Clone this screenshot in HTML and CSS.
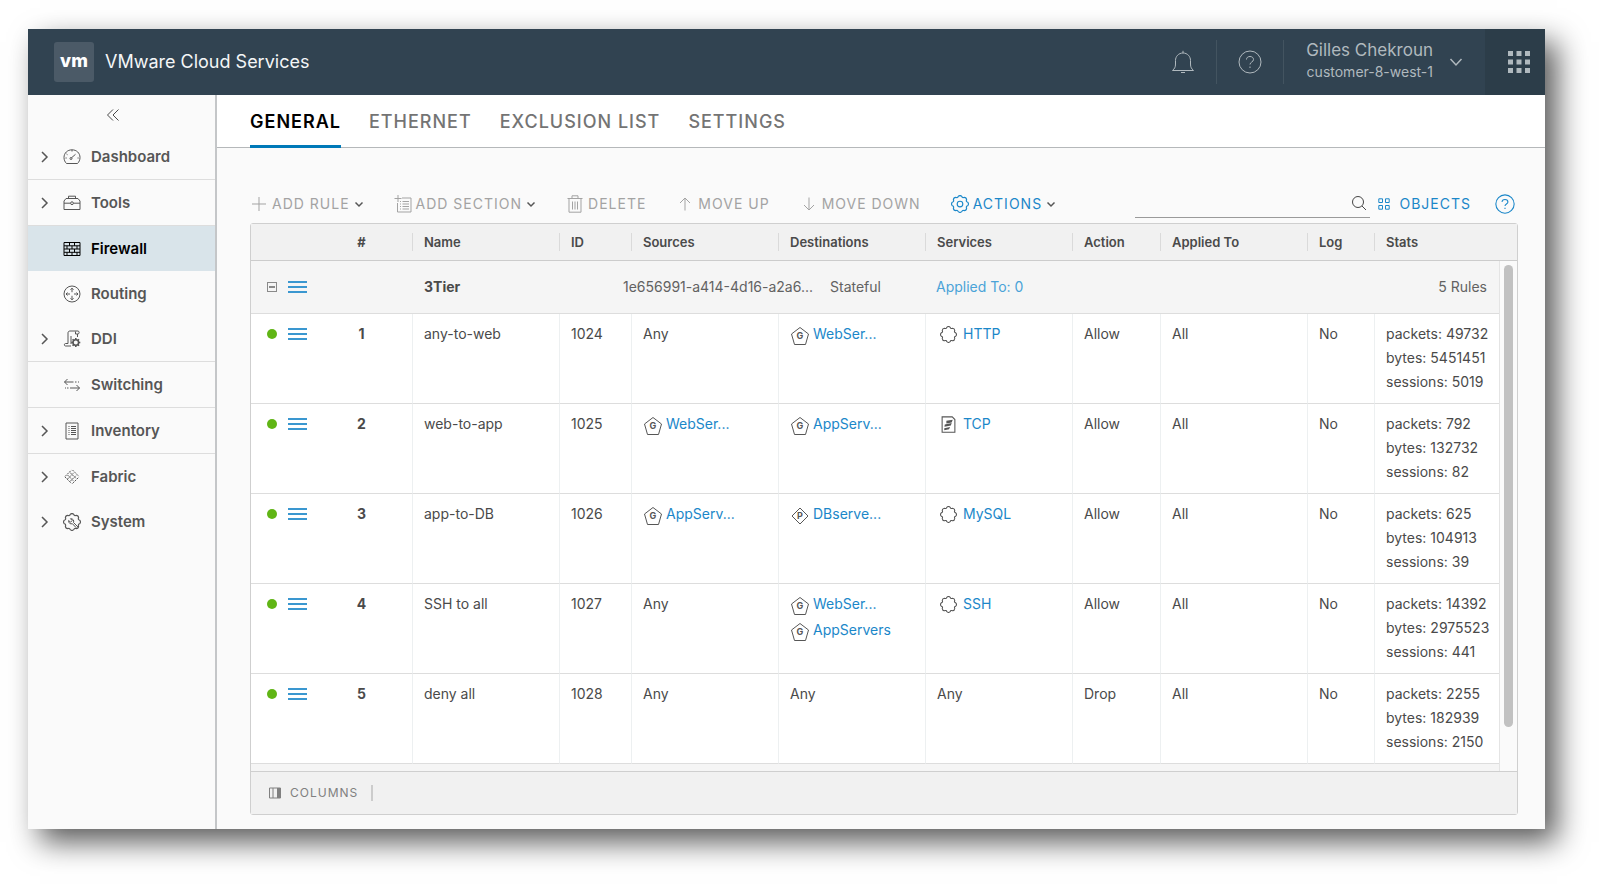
FILE: index.html
```html
<!DOCTYPE html>
<html lang="en">
<head>
    <meta charset="UTF-8">
    <meta name="viewport" content="width=device-width, initial-scale=1.0">
    <title>VMware Cloud Services</title>
    <link rel="stylesheet" href="styles.css">
</head>
<body>

    <svg class="sprite" aria-hidden="true">
        <symbol id="chevron" viewBox="0 0 12 12"><path d="M3 1l5 5-5 5"/></symbol>
        <symbol id="caret" viewBox="0 0 10 10"><path d="M1.500 3.500L5 7l3.500-3.500"/></symbol>
        <symbol id="gear" viewBox="0 0 16 16"><path d="M14.800 9.600A1.300 1.300 0 0 0 13.900 11.700A2.400 2.400 0 0 1 11.700 13.900A1.300 1.300 0 0 0 9.600 14.800A2.400 2.400 0 0 1 6.400 14.800A1.300 1.300 0 0 0 4.300 13.900A2.400 2.400 0 0 1 2.100 11.700A1.300 1.300 0 0 0 1.200 9.600A2.400 2.400 0 0 1 1.200 6.400A1.300 1.300 0 0 0 2.100 4.300A2.400 2.400 0 0 1 4.300 2.100A1.300 1.300 0 0 0 6.400 1.200A2.400 2.400 0 0 1 9.600 1.200A1.300 1.300 0 0 0 11.700 2.100A2.400 2.400 0 0 1 13.900 4.300A1.300 1.300 0 0 0 14.800 6.400A2.400 2.400 0 0 1 14.800 9.600Z"/></symbol>
        <symbol id="group" viewBox="0 0 20 20"><path d="M10 1.500L18.500 8l-3 10.500h-11l-3-10.500z"/></symbol>
        <symbol id="pool" viewBox="0 0 20 20"><path d="M10 2l8 8-8 8-8-8z"/></symbol>
        <symbol id="script" viewBox="0 0 16 16">
            <path d="M2 .8h9.500l2.500 2.500v12H2z"/>
            <path class="solid" d="M6 4.500l6-1-1 2.500-5 1zM4.500 8l6.500-1.500-.8 2.500-6 1.200zM4 11.500l5.500-1.200-1 2.200-4.500 1z"/>
        </symbol>
        <symbol id="help" viewBox="0 0 24 24">
            <circle cx="12" cy="12" r="11"/>
            <path d="M8.500 9.500C8.500 7.500 10 6.500 12 6.500s3.500 1.200 3.500 3c0 2.500-3.500 2.500-3.500 5M12 16.500v1.500"/>
        </symbol>
    </svg>

    <div class="window">
        <header class="topbar">
            <span class="logo">vm</span>
            <h1 class="product">VMware Cloud Services</h1>
            <button class="top-btn" aria-label="Notifications">
                <svg class="icon-lg" viewBox="0 0 24 24"><path d="M1.500 20.500h21c-2-2-3-3-3-6.500V10.500c0-4-3-7.500-7.500-7.500s-7.500 3.500-7.500 7.500V14c0 3.500-1 4.500-3 6.500zM12 3V.8M10 22.500h4"/></svg>
            </button>
            <button class="top-btn" aria-label="Help">
                <svg class="icon-lg"><use href="#help"/></svg>
            </button>
            <button class="user">
                <span class="user-text">
                    <span class="user-name">Gilles Chekroun</span>
                    <span class="user-org">customer-8-west-1</span>
                </span>
                <svg class="user-caret" viewBox="0 0 14 14"><path d="M1.500 4L7 10l5.500-6"/></svg>
            </button>
            <button class="apps" aria-label="Services">
                <svg viewBox="0 0 22 22"><path d="M0 0h5v5H0zM8.500 0h5v5h-5zM17 0h5v5h-5zM0 8.500h5v5H0zM8.500 8.500h5v5h-5zM17 8.500h5v5h-5zM0 17h5v5H0zM8.500 17h5v5h-5zM17 17h5v5h-5z"/></svg>
            </button>
        </header>

        <div class="layout">
            <nav class="sidebar">
                <button class="collapse" aria-label="Collapse menu">
                    <svg viewBox="0 0 14 14"><path d="M7 1.500L1.500 7 7 12.500M12.500 1.500L7 7l5.500 5.500"/></svg>
                </button>
                <a class="nav-item line" href="#">
                    <svg class="arrow"><use href="#chevron"/></svg>
                    <svg class="nav-icon" viewBox="0 0 18 18"><path d="M3.500 15.500h11C16 14 17 12 17 9.500 17 5 13.500 1.800 9 1.800S1 5 1 9.500c0 2.500 1 4.500 2.500 6zM8.500 9.800l4-3.500M9 2v1.500M3.500 6l1 .7M2.500 10h1.200M14.500 10h1.200"/><circle cx="8" cy="10.500" r="1"/></svg>
                    <span>Dashboard</span>
                </a>
                <a class="nav-item line" href="#">
                    <svg class="arrow"><use href="#chevron"/></svg>
                    <svg class="nav-icon" viewBox="0 0 18 18"><path d="M1 7l2-2.500h12L17 7v8.500H1zM1 9.200h6.500M10.500 9.200H17M5.500 4.500V2.200h7v2.300"/><circle cx="9" cy="9.200" r="1.400"/></svg>
                    <span>Tools</span>
                </a>
                <a class="nav-item active" href="#">
                    <span class="arrow"></span>
                    <svg class="nav-icon" viewBox="0 0 18 18"><path d="M1 2.500h16v13H1zM1 5.800h16M1 9h16M1 12.300h16M6.500 2.500v3.300M11.500 2.500v3.300M4 5.800V9M9 5.800V9M14 5.800V9M6.500 9v3.300M11.500 9v3.300M4 12.300v3.200M9 12.300v3.200M14 12.300v3.200"/></svg>
                    <span>Firewall</span>
                </a>
                <a class="nav-item" href="#">
                    <span class="arrow"></span>
                    <svg class="nav-icon" viewBox="0 0 18 18"><circle cx="9" cy="9" r="8"/><path d="M9 3.200v4M7.500 4.700L9 3.200l1.500 1.500M9 14.800v-4M7.500 13.300L9 14.800l1.500-1.500M3 9h4M4.500 7.500L3 9l1.500 1.500M15 9h-4M13.500 7.500L15 9l-1.500 1.500"/></svg>
                    <span>Routing</span>
                </a>
                <a class="nav-item line" href="#">
                    <svg class="arrow"><use href="#chevron"/></svg>
                    <svg class="nav-icon" viewBox="0 0 18 18"><path d="M8 16H2.500C1 16 1 13.500 2.500 13.500H5V3c0-1.200.7-2 2-2h8c1.500 0 1.500 3 0 3h-2.500V1.500M8 6v8M14.500 4v3"/><circle class="bold" cx="12.800" cy="12.500" r="2.800"/><path class="bold" d="M12.800 8v2M12.800 15v2M8.300 12.500h2M15.300 12.500h2M9.600 9.300l1.400 1.400M14.600 14.300l1.400 1.400M16 9.300l-1.400 1.400M11 14.300l-1.400 1.400"/></svg>
                    <span>DDI</span>
                </a>
                <a class="nav-item line" href="#">
                    <span class="arrow"></span>
                    <svg class="nav-icon" viewBox="0 0 18 18"><path d="M4.500 3L1.500 6l3 3M1.500 6h9M12 6h1.500M15 6h1M13.500 9l3 3-3 3M16.500 12H7M5.500 12H4M3 12H2"/></svg>
                    <span>Switching</span>
                </a>
                <a class="nav-item line" href="#">
                    <svg class="arrow"><use href="#chevron"/></svg>
                    <svg class="nav-icon" viewBox="0 0 18 18"><path d="M3 1h12v16H3z"/><path d="M5.500 4.500h1M8 4.500h5M5.500 6.500h1M8 6.500h5M5.500 8.500h1M8 8.500h5M5.500 10.500h1M8 10.500h5M5.500 12.500h1M8 12.500h5"/></svg>
                    <span>Inventory</span>
                </a>
                <a class="nav-item" href="#">
                    <svg class="arrow"><use href="#chevron"/></svg>
                    <svg class="nav-icon" viewBox="0 0 18 18"><path d="M2 8.500l6.500-6.500M4.500 11L11 4.500M7 13.500L13.500 7M9.500 15.500L16 9M9.500 2L16 8.500M7 4.500l6.500 6.500M4.500 7l6.500 6.500M2 9l6.500 6.500" stroke-dasharray="2 1"/></svg>
                    <span>Fabric</span>
                </a>
                <a class="nav-item" href="#">
                    <svg class="arrow"><use href="#chevron"/></svg>
                    <svg class="nav-icon" viewBox="0 0 18 18"><use href="#gear" width="18" height="18"/><path d="M15 14l-4.500-4.500c.8-2-.5-4-3-3.800l1.700 1.800-1.600 1.700-2-1.700c-.2 2.500 1.800 4 3.800 3.200l3.800 4"/></svg>
                    <span>System</span>
                </a>
            </nav>

            <main class="main">
                <div class="tabs">
                    <a class="tab selected" href="#">GENERAL</a>
                    <a class="tab" href="#">ETHERNET</a>
                    <a class="tab" href="#">EXCLUSION LIST</a>
                    <a class="tab" href="#">SETTINGS</a>
                </div>

                <div class="content">
                    <div class="toolbar">
                        <button class="tool">
                            <svg class="icon-md" viewBox="0 0 18 18"><path d="M9 2v14M2 9h14"/></svg>
                            ADD RULE
                            <svg class="caret"><use href="#caret"/></svg>
                        </button>
                        <button class="tool">
                            <svg class="icon-md" viewBox="0 0 18 18"><path d="M8 3h9v14H3.500V8M4 0v7M.5 3.500h7M6 6.500h1M8.500 6.500H15M6 9h1M8.500 9H15M6 11.500h1M8.500 11.500H15M6 14h1M8.500 14H15"/></svg>
                            ADD SECTION
                            <svg class="caret"><use href="#caret"/></svg>
                        </button>
                        <button class="tool">
                            <svg class="icon-md" viewBox="0 0 18 18"><path d="M1.500 3.500h15M3 3.500v13.700h12V3.500M6 3V.8h6V3M6.500 6.500v8M9 6.500v8M11.500 6.500v8"/></svg>
                            DELETE
                        </button>
                        <button class="tool">
                            <svg class="icon-md" viewBox="0 0 18 18"><path d="M9 15.500V3M4 8l5-5 5 5"/></svg>
                            MOVE UP
                        </button>
                        <button class="tool">
                            <svg class="icon-md" viewBox="0 0 18 18"><path d="M9 2.500V15M4 10l5 5 5-5"/></svg>
                            MOVE DOWN
                        </button>
                        <button class="tool blue">
                            <svg class="icon-md" viewBox="0 0 16 16"><use href="#gear"/><circle cx="8" cy="8" r="2.500"/></svg>
                            ACTIONS
                            <svg class="caret"><use href="#caret"/></svg>
                        </button>
                        <label class="search">
                            <input type="text" aria-label="Search rules">
                            <svg viewBox="0 0 16 16"><circle cx="7" cy="7" r="5.500"/><path d="M11 11l4 4"/></svg>
                        </label>
                        <button class="tool blue objects">
                            <svg class="icon-sm" viewBox="0 0 12 12"><path d="M.8.8h3.700v3.700H.8zM7.500.8h3.700v3.700H7.500zM.8 7.500h3.700v3.700H.8zM7.500 7.500h3.700v3.700H7.500z"/></svg>
                            OBJECTS
                        </button>
                        <button class="tool blue" aria-label="Help">
                            <svg class="icon-help"><use href="#help"/></svg>
                        </button>
                    </div>

                    <div class="panel">
                        <table class="rules">
                            <colgroup>
                                <col class="c-state"><col class="c-num"><col class="c-wide"><col class="c-id">
                                <col class="c-wide"><col class="c-wide"><col class="c-wide"><col class="c-action">
                                <col class="c-wide"><col class="c-log"><col class="c-stats">
                            </colgroup>
                            <thead>
                                <tr>
                                    <th></th>
                                    <th class="num">#</th>
                                    <th><span>Name</span></th>
                                    <th><span>ID</span></th>
                                    <th><span>Sources</span></th>
                                    <th><span>Destinations</span></th>
                                    <th><span>Services</span></th>
                                    <th><span>Action</span></th>
                                    <th><span>Applied To</span></th>
                                    <th><span>Log</span></th>
                                    <th><span>Stats</span></th>
                                </tr>
                            </thead>
                            <tbody>
                                <tr class="section">
                                    <td colspan="2">
                                        <div class="state">
                                            <button class="toggle" aria-label="Collapse section"><svg viewBox="0 0 10 10"><path d="M0 0h10v10H0zM2 5h6"/></svg></button>
                                            <button class="bars" aria-label="Section menu"></button>
                                        </div>
                                    </td>
                                    <td colspan="9">
                                        <div class="section-info">
                                            <b>3Tier</b>
                                            <span class="uuid">1e656991-a414-4d16-a2a6...</span>
                                            <span class="stateful">Stateful</span>
                                            <a href="#">Applied To: 0</a>
                                            <span class="count">5 Rules</span>
                                        </div>
                                    </td>
                                </tr>
                                <tr>
                                    <td><div class="state"><i class="dot"></i><button class="bars" aria-label="Rule menu"></button></div></td>
                                    <td class="num">1</td>
                                    <td>any-to-web</td>
                                    <td>1024</td>
                                    <td>Any</td>
                                    <td><a class="obj" href="#"><span class="badge"><svg><use href="#group"/></svg>G</span>WebSer...</a></td>
                                    <td><a class="svc" href="#"><svg><use href="#gear"/></svg>HTTP</a></td>
                                    <td>Allow</td>
                                    <td>All</td>
                                    <td>No</td>
                                    <td>packets: 49732<br>bytes: 5451451<br>sessions: 5019</td>
                                </tr>
                                <tr>
                                    <td><div class="state"><i class="dot"></i><button class="bars" aria-label="Rule menu"></button></div></td>
                                    <td class="num">2</td>
                                    <td>web-to-app</td>
                                    <td>1025</td>
                                    <td><a class="obj" href="#"><span class="badge"><svg><use href="#group"/></svg>G</span>WebSer...</a></td>
                                    <td><a class="obj" href="#"><span class="badge"><svg><use href="#group"/></svg>G</span>AppServ...</a></td>
                                    <td><a class="svc" href="#"><svg><use href="#script"/></svg>TCP</a></td>
                                    <td>Allow</td>
                                    <td>All</td>
                                    <td>No</td>
                                    <td>packets: 792<br>bytes: 132732<br>sessions: 82</td>
                                </tr>
                                <tr>
                                    <td><div class="state"><i class="dot"></i><button class="bars" aria-label="Rule menu"></button></div></td>
                                    <td class="num">3</td>
                                    <td>app-to-DB</td>
                                    <td>1026</td>
                                    <td><a class="obj" href="#"><span class="badge"><svg><use href="#group"/></svg>G</span>AppServ...</a></td>
                                    <td><a class="obj" href="#"><span class="badge"><svg><use href="#pool"/></svg>P</span>DBserve...</a></td>
                                    <td><a class="svc" href="#"><svg><use href="#gear"/></svg>MySQL</a></td>
                                    <td>Allow</td>
                                    <td>All</td>
                                    <td>No</td>
                                    <td>packets: 625<br>bytes: 104913<br>sessions: 39</td>
                                </tr>
                                <tr>
                                    <td><div class="state"><i class="dot"></i><button class="bars" aria-label="Rule menu"></button></div></td>
                                    <td class="num">4</td>
                                    <td>SSH to all</td>
                                    <td>1027</td>
                                    <td>Any</td>
                                    <td>
                                        <a class="obj" href="#"><span class="badge"><svg><use href="#group"/></svg>G</span>WebSer...</a>
                                        <a class="obj" href="#"><span class="badge"><svg><use href="#group"/></svg>G</span>AppServers</a>
                                    </td>
                                    <td><a class="svc" href="#"><svg><use href="#gear"/></svg>SSH</a></td>
                                    <td>Allow</td>
                                    <td>All</td>
                                    <td>No</td>
                                    <td>packets: 14392<br>bytes: 2975523<br>sessions: 441</td>
                                </tr>
                                <tr>
                                    <td><div class="state"><i class="dot"></i><button class="bars" aria-label="Rule menu"></button></div></td>
                                    <td class="num">5</td>
                                    <td>deny all</td>
                                    <td>1028</td>
                                    <td>Any</td>
                                    <td>Any</td>
                                    <td>Any</td>
                                    <td>Drop</td>
                                    <td>All</td>
                                    <td>No</td>
                                    <td>packets: 2255<br>bytes: 182939<br>sessions: 2150</td>
                                </tr>
                            </tbody>
                        </table>
                        <div class="scrollbar"><div class="thumb"></div></div>
                        <div class="panel-foot">
                            <button class="columns">
                                <svg viewBox="0 0 12 12"><path d="M.5 1h11v10H.5zM4 1v10"/><path class="solid" d="M8 1h3.500v10H8z"/></svg>
                                COLUMNS
                            </button>
                        </div>
                    </div>
                </div>
            </main>
        </div>
    </div>

</body>
</html>
```
FILE: styles.css
```css
* {
    box-sizing: border-box;
}

body {
    margin: 0;
    padding: 29px 55px 55px 28px;
    min-height: 100vh;
    display: flex;
    background-color: #fff;
    color: #4a4a4a;
    font-family: Inter, "Open Sans", sans-serif;
    font-size: 14px;
    line-height: 24px;
}

a {
    color: #1b87c9;
    text-decoration: none;
}

button {
    display: flex;
    align-items: center;
    padding: 0;
    border: none;
    background: none;
    color: inherit;
    font: inherit;
    cursor: pointer;
}

svg {
    display: block;
    flex: none;
    fill: none;
    stroke: currentColor;
}

svg .solid {
    fill: currentColor;
    stroke: none;
}

.sprite {
    position: absolute;
    width: 0;
    height: 0;
}

.window {
    flex: 1;
    display: flex;
    flex-direction: column;
    min-width: 0;
    background-color: #fafafa;
    box-shadow: 12px 13px 28px rgba(0, 0, 0, 0.65);
}

/* top bar */
.topbar {
    display: flex;
    align-items: center;
    height: 66px;
    padding-left: 26px;
    background-color: #314351;
    color: #b0b9be;
}

.logo {
    width: 40px;
    height: 40px;
    border-radius: 3px;
    background-color: #4b5a67;
    color: #fff;
    font-size: 18px;
    font-weight: 800;
    line-height: 38px;
    text-align: center;
}

.product {
    margin: 0 auto 0 11px;
    color: #f4f6f7;
    font-size: 18px;
    font-weight: 400;
}

.top-btn {
    justify-content: center;
    width: 67px;
    height: 44px;
    border-right: 1px solid #435460;
}

.icon-lg {
    width: 24px;
    height: 24px;
}

.user {
    gap: 16px;
    padding: 0 22px;
}

.user-text {
    display: flex;
    flex-direction: column;
    padding-bottom: 2px;
    line-height: 22px;
    text-align: right;
}

.user-name {
    font-size: 17px;
}

.user-org {
    font-size: 14px;
}

.user-caret {
    width: 14px;
    height: 14px;
    stroke-width: 1.5;
}

.apps {
    justify-content: center;
    width: 60px;
    height: 66px;
    padding-left: 8px;
    background-color: #2c3d49;
}

.apps svg {
    width: 22px;
    height: 22px;
    fill: currentColor;
    stroke: none;
}

/* sidebar */
.layout {
    flex: 1;
    display: flex;
}

.sidebar {
    flex: none;
    width: 189px;
    border-right: 2px solid #c4c6c8;
}

.collapse {
    justify-content: center;
    width: 170px;
    height: 39px;
}

.collapse svg {
    width: 14px;
    height: 14px;
}

.nav-item {
    display: flex;
    align-items: center;
    height: 45px;
    padding-left: 11px;
    color: #565656;
    font-size: 15px;
    font-weight: 600;
}

.nav-item.line {
    height: 46px;
    border-bottom: 1px solid #dddddd;
}

.nav-item.active {
    background-color: #d9e4ea;
    color: #000;
}

.arrow {
    width: 12px;
    height: 12px;
    margin-right: 12px;
    stroke-width: 1.5;
}

.nav-icon {
    width: 18px;
    height: 18px;
    margin-right: 10px;
}

.nav-icon .bold {
    stroke-width: 1.6;
}

/* tabs */
.main {
    flex: 1;
    display: flex;
    flex-direction: column;
    min-width: 0;
}

.tabs {
    display: flex;
    gap: 28px;
    height: 53px;
    padding-left: 33px;
    border-bottom: 1px solid #b5b8ba;
    background-color: #fff;
}

.tab {
    height: 53px;
    color: #747474;
    font-size: 18px;
    font-weight: 500;
    letter-spacing: 1px;
    line-height: 53px;
}

.tab.selected {
    border-bottom: 3px solid #0079b8;
    color: #000;
    font-weight: 600;
}

.content {
    padding: 38px 27px 14px 33px;
}

/* toolbar */
.toolbar {
    display: flex;
    align-items: center;
    height: 37px;
    padding-bottom: 2px;
    color: #a3a3a3;
}

.tool {
    gap: 4px;
    margin-right: 30px;
    letter-spacing: 1px;
    white-space: nowrap;
}

.tool.blue {
    color: #1b87c9;
}

.icon-md {
    width: 18px;
    height: 18px;
}

.caret {
    width: 10px;
    height: 10px;
    color: #565656;
    stroke-width: 1.5;
}

.search {
    display: flex;
    align-items: center;
    width: 235px;
    height: 28px;
    margin-left: auto;
    border-bottom: 1px solid #9a9a9a;
    color: #454545;
}

.search input {
    flex: 1;
    min-width: 0;
    border: none;
    outline: none;
    background: none;
    font: inherit;
}

.search svg {
    width: 16px;
    height: 16px;
    margin-right: 3px;
}

.tool.objects {
    gap: 9px;
    margin: 0 24px 0 8px;
}

.icon-sm {
    width: 12px;
    height: 12px;
}

.icon-help {
    width: 20px;
    height: 20px;
    stroke-width: 1.3;
}

.toolbar .tool:last-child {
    margin-right: 3px;
}

/* rules table */
.panel {
    position: relative;
    border: 1px solid #cfcfcf;
    border-radius: 3px;
    background-color: #f5f5f5;
}

.rules {
    width: 100%;
    margin-bottom: 7px;
    table-layout: fixed;
    border-collapse: separate;
    border-spacing: 0;
}

.c-state { width: 60px; }
.c-num { width: 101px; }
.c-wide { width: 147px; }
.c-id { width: 72px; }
.c-action { width: 88px; }
.c-log { width: 67px; }

.rules th {
    height: 37px;
    padding: 0;
    border-bottom: 1px solid #cccccc;
    background-color: #f1f1f1;
    font-size: 13px;
    font-weight: 600;
    text-align: left;
}

.rules th span {
    display: block;
    padding-left: 11px;
    border-left: 1px solid #dadada;
    line-height: 18px;
}

.rules td {
    height: 90px;
    padding: 8px 0 8px 11px;
    border-bottom: 1px solid #dddddd;
    border-left: 1px solid #edf0f1;
    background-color: #fff;
    vertical-align: top;
    white-space: nowrap;
}

.rules td:first-child,
.rules td.num,
.rules .section td {
    border-left: none;
}

.rules .num {
    padding-left: 0;
    font-weight: 700;
    text-align: center;
}

.rules .section td {
    height: 53px;
    padding-left: 12px;
    background-color: #f5f5f5;
    color: #626262;
    vertical-align: middle;
}

.rules td:first-child {
    padding-left: 16px;
}

.rules .section td:first-child {
    padding-left: 16px;
}

.state {
    display: flex;
    align-items: center;
    height: 24px;
}

.dot {
    width: 10px;
    height: 10px;
    margin-right: 11px;
    border-radius: 50%;
    background-color: #60b515;
}

.bars {
    width: 19px;
    height: 12px;
    background: repeating-linear-gradient(#3a97d0 0 2px, transparent 2px 5px);
}

.toggle {
    margin-right: 11px;
    color: #8a8a8a;
}

.toggle svg {
    width: 10px;
    height: 10px;
    stroke-width: 2;
}

.section-info {
    display: flex;
    padding-right: 30px;
}

.section-info b {
    width: 199px;
    color: #4a4a4a;
}

.uuid {
    width: 207px;
}

.stateful {
    width: 106px;
}

.section-info a {
    color: #4aa3d8;
}

.count {
    margin-left: auto;
}

.obj,
.svc {
    display: flex;
    align-items: center;
    height: 24px;
}

.obj + .obj {
    margin-top: 2px;
}

.badge {
    display: grid;
    place-items: center;
    width: 20px;
    height: 20px;
    margin: 4px 3px 0 0;
    color: #565656;
    font-size: 9px;
    font-weight: 700;
    line-height: 20px;
    grid-template-areas: "icon";
}

.badge svg {
    width: 20px;
    height: 20px;
    margin-bottom: -20px;
}

.svc svg {
    width: 17px;
    height: 17px;
    margin: 0 6px 0 3px;
    color: #565656;
}

.scrollbar {
    position: absolute;
    top: 37px;
    right: 0;
    bottom: 43px;
    width: 18px;
    padding: 4px;
    border-left: 1px solid #e4e4e4;
    background-color: #fafafa;
}

.thumb {
    width: 9px;
    height: 92%;
    border-radius: 5px;
    background-color: #c1c1c1;
}

.panel-foot {
    display: flex;
    align-items: center;
    height: 43px;
    padding-left: 18px;
    border-top: 1px solid #cfcfcf;
    background-color: #f1f1f1;
}

.columns {
    gap: 9px;
    height: 16px;
    padding-right: 13px;
    border-right: 2px solid #cccccc;
    color: #808080;
    font-size: 12px;
    letter-spacing: 1px;
}

.columns svg {
    width: 12px;
    height: 12px;
}
```
